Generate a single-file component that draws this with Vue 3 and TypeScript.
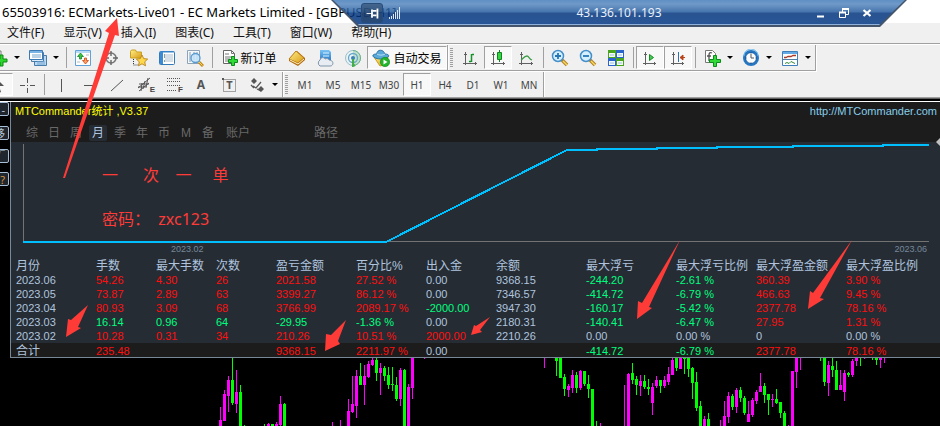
<script setup lang="ts">
interface Tool {
  id: string
  label: string
  text?: string
  pressed?: boolean
  menu?: boolean
  badge?: string
  glyph?: string
}
type Tone = 'r' | 'g' | 'n'
type Candle = [x: number, high: number, low: number, top: number, bottom: number, up: 0 | 1]

const menus = ['文件(F)', '显示(V)', '插入(I)', '图表(C)', '工具(T)', '窗口(W)', '帮助(H)']

const fileTools: Tool[][] = [
  [
    { id: 'new-chart', label: '新图表', menu: true },
    { id: 'profiles', label: '配置文件', menu: true },
  ],
  [
    { id: 'market', label: '市场报价' },
    { id: 'target', label: '数据窗口' },
    { id: 'favorites', label: '导航' },
    { id: 'terminal', label: '终端' },
    { id: 'tester', label: '策略测试' },
  ],
  [
    { id: 'order', label: '新订单', text: '新订单' },
    { id: 'book', label: 'MetaEditor' },
    { id: 'cloud', label: '虚拟主机' },
    { id: 'signals', label: '信号' },
    { id: 'auto', label: '自动交易', text: '自动交易', pressed: true },
  ],
]
const chartTools: Tool[][] = [
  [
    { id: 'bars', label: '柱状图' },
    { id: 'candles', label: '阴阳烛', pressed: true },
    { id: 'line', label: '折线图' },
  ],
  [
    { id: 'zoom-in', label: '放大' },
    { id: 'zoom-out', label: '缩小' },
    { id: 'tile', label: '平铺窗口' },
  ],
  [
    { id: 'scroll', label: '自动滚动', pressed: true },
    { id: 'shift', label: '图表平移', pressed: true },
  ],
  [
    { id: 'indicator', label: '指标', menu: true },
    { id: 'clock', label: '周期', menu: true },
    { id: 'template', label: '模板', menu: true },
  ],
]
const drawTools: Tool[][] = [
  [
    { id: 'cursor', label: '光标', pressed: true },
    { id: 'cross', label: '十字线' },
  ],
  [
    { id: 'vline', label: '垂直线' },
    { id: 'hline', label: '水平线' },
    { id: 'trend', label: '趋势线' },
    { id: 'channel', label: '等距通道', badge: 'E' },
    { id: 'fibo', label: '斐波那契', badge: 'F' },
    { id: 'text', label: '文字', glyph: 'A' },
    { id: 'textbox', label: '文字标签', glyph: 'T' },
    { id: 'arrows', label: '箭头', menu: true },
  ],
]
const periods = ['M1', 'M5', 'M15', 'M30', 'H1', 'H4', 'D1', 'W1', 'MN']
const tabs = ['综', '日', '周', '月', '季', '年', '币', 'M', '备', '账户', '路径']
const sideKeys = ['-', '移', '√', '?']
const notes = ['一      次    一     单', '密码：  zxc123']

const headers = ['月份', '手数', '最大手数', '次数', '盈亏金额', '百分比%', '出入金', '余额', '最大浮亏', '最大浮亏比例', '最大浮盈金额', '最大浮盈比例']
const rows: { cells: string[]; tones: string }[] = [
  { cells: ['2023.06', '54.26', '4.30', '26', '2021.58', '27.52 %', '0.00', '9368.15', '-244.20', '-2.61 %', '360.39', '3.90 %'], tones: 'nrrrrrnnggrr' },
  { cells: ['2023.05', '73.87', '2.89', '63', '3399.27', '86.12 %', '0.00', '7346.57', '-414.72', '-6.79 %', '466.63', '9.45 %'], tones: 'nrrrrrnnggrr' },
  { cells: ['2023.04', '80.93', '3.09', '68', '3766.99', '2089.17 %', '-2000.00', '3947.30', '-160.17', '-5.42 %', '2377.78', '78.16 %'], tones: 'nrrrrrgnggrr' },
  { cells: ['2023.03', '16.14', '0.96', '64', '-29.95', '-1.36 %', '0.00', '2180.31', '-140.41', '-6.47 %', '27.95', '1.31 %'], tones: 'ngggggnnggrr' },
  { cells: ['2023.02', '10.28', '0.31', '34', '210.26', '10.51 %', '2000.00', '2210.26', '0.00', '0.00 %', '0', '0.00 %'], tones: 'nrrrrrrnnnnn' },
]
const total = { cells: ['合计', '235.48', '', '', '9368.15', '2211.97 %', '0.00', '', '-414.72', '-6.79 %', '2377.78', '78.16 %'], tones: 'nrnnrrnnggrr' }
const tone = (tones: string, i: number): Tone => tones[i] as Tone

const candles: Candle[] = [
  [220, 49, 68, 62, 68, 1], [224, 32, 63, 36, 63, 1], [228, 18, 54, 22, 38, 1], [232, 0, 47, 22, 45, 0],
  [236, 12, 55, 34, 46, 1], [240, 27, 68, 34, 68, 0], [244, 67, 68, 67, 67, 0], [264, 66, 68, 66, 66, 0],
  [268, 65, 68, 66, 68, 1], [272, 66, 68, 66, 68, 0], [276, 64, 68, 66, 68, 1], [280, 38, 68, 46, 67, 1],
  [284, 45, 68, 46, 68, 0], [332, 64, 68, 64, 64, 1], [340, 62, 68, 62, 62, 1], [348, 41, 68, 53, 68, 1],
  [352, 18, 55, 46, 54, 1], [356, 12, 60, 18, 48, 1], [360, 5, 27, 18, 27, 0], [364, 7, 47, 18, 27, 1],
  [368, 3, 20, 6, 19, 1], [372, 0, 8, 2, 7, 1], [376, 0, 23, 2, 15, 0], [380, 5, 37, 10, 15, 1],
  [384, 8, 23, 10, 18, 0], [388, 9, 31, 17, 27, 0], [392, 9, 33, 26, 27, 0], [396, 19, 43, 27, 41, 0],
  [400, 10, 48, 12, 41, 1], [404, 11, 68, 12, 68, 0], [408, 26, 68, 29, 68, 1], [412, 0, 41, 0, 30, 1],
  [424, 0, 1, 0, 0, 1], [544, 0, 10, 0, 0, 1], [556, 0, 18, 0, 3, 0], [560, 0, 20, 0, 20, 0],
  [564, 16, 38, 19, 31, 0], [568, 26, 39, 28, 32, 1], [572, 12, 35, 17, 30, 1], [576, 14, 35, 17, 30, 0],
  [580, 12, 32, 13, 30, 1], [584, 13, 28, 13, 26, 0], [588, 17, 40, 26, 31, 0], [592, 31, 68, 31, 68, 0],
  [596, 63, 68, 63, 63, 0], [600, 65, 68, 65, 65, 1], [624, 27, 68, 27, 27, 1], [628, 15, 68, 16, 68, 1],
  [632, 5, 26, 15, 22, 0], [636, 18, 37, 21, 27, 0], [640, 17, 38, 23, 28, 1], [644, 17, 31, 23, 29, 0],
  [648, 21, 37, 29, 31, 0], [652, 25, 57, 29, 45, 1], [656, 18, 30, 22, 28, 1], [660, 22, 35, 22, 28, 0],
  [664, 18, 30, 22, 28, 1], [668, 9, 27, 16, 24, 1], [672, 0, 17, 2, 17, 1], [676, 0, 13, 0, 10, 0],
  [680, 0, 11, 0, 11, 1], [684, 0, 16, 0, 1, 0], [688, 0, 19, 0, 11, 0], [692, 9, 41, 10, 25, 0],
  [696, 14, 53, 24, 50, 0], [700, 43, 68, 48, 68, 0], [704, 58, 68, 61, 68, 1], [708, 55, 68, 61, 68, 0],
  [720, 62, 68, 62, 62, 1], [724, 43, 68, 58, 68, 1], [728, 34, 65, 38, 59, 1], [732, 36, 52, 38, 49, 0],
  [736, 30, 55, 32, 49, 1], [740, 29, 44, 32, 40, 0], [744, 38, 57, 40, 55, 0], [748, 43, 64, 56, 64, 1],
  [752, 40, 59, 42, 57, 1], [756, 32, 46, 34, 43, 1], [760, 15, 34, 28, 34, 1], [764, 25, 45, 28, 37, 0],
  [768, 36, 57, 36, 42, 0], [772, 36, 49, 41, 42, 1], [776, 31, 46, 41, 45, 0], [780, 44, 60, 44, 55, 0],
  [784, 53, 68, 55, 68, 0], [788, 67, 68, 67, 67, 1], [792, 13, 68, 13, 68, 1], [796, 0, 30, 0, 14, 1],
  [800, 0, 12, 0, 0, 1], [820, 0, 3, 0, 0, 0], [824, 0, 28, 0, 24, 0], [828, 3, 38, 7, 25, 1],
  [832, 0, 19, 8, 12, 0], [836, 3, 32, 12, 32, 0], [840, 12, 32, 27, 32, 1], [844, 12, 43, 15, 34, 1],
  [848, 14, 19, 15, 17, 0], [852, 1, 19, 3, 17, 1], [856, 0, 8, 0, 3, 1], [860, 0, 8, 0, 0, 0],
  [864, 0, 1, 0, 0, 1], [872, 0, 2, 0, 0, 0], [876, 0, 7, 0, 2, 0], [880, 0, 10, 0, 2, 1], [884, 0, 5, 0, 0, 1],
]

const arrows = [
  '117,18 105,31 109,33 63,178 65,178 115,35 119,36',
  '66,337 68,319 71,320 88,305 78,327 81,328',
  '325,351 326,334 331,335 346,320 338,341 340,344',
  '471,335 474,325 476,326 490,317 480,330 482,332',
  '637,319 638,301 642,303 680,240 649,307 652,308',
  '808,309 810,291 813,293 852,240 820,298 824,299',
]
</script>

<template>
  <svg class="sprite" aria-hidden="true">
    <defs>
      <linearGradient id="blue" x1="0" y1="0" x2="0" y2="1"><stop offset="0" stop-color="#7cc4f4" /><stop offset="1" stop-color="#1f74c4" /></linearGradient>
      <linearGradient id="gold" x1="0" y1="0" x2="1" y2="1"><stop offset="0" stop-color="#fff08a" /><stop offset="1" stop-color="#d99a16" /></linearGradient>
    </defs>
    <symbol id="new-chart" viewBox="0 0 18 18"><path d="M1 2h10v11H1z" fill="#fff" stroke="#777" /><path d="M10 6h3v4h4v3h-4v4h-3v-4H6v-3h4z" fill="#2ed52e" stroke="#0b8a13" /></symbol>
    <symbol id="profiles" viewBox="0 0 18 18"><path d="M5.500 6.500h12v10h-12z" fill="#b9d8f2" stroke="#477cab" /><path d="M2.500 3.500h12v9h-12z" fill="#dcecf9" stroke="#477cab" /><path d="M.5 1.500h13v9H.5z" fill="#fff" stroke="#3d79b4" /><path d="M1 3h12" stroke="#79b3e4" stroke-width="2" /><path d="M3 6h9M3 8h9M8 13h8M8 15h8" stroke="#72a4d0" /></symbol>
    <symbol id="market" viewBox="0 0 18 18"><path d="M1.500 1.500h15v15h-15z" fill="#fff" stroke="#62a2d8" /><path d="M2 2h14v2H2z" fill="#b8dbf4" /><path d="M6.500 4l3 3.500h-2V10h-2V7.500h-2z" fill="#35c43b" stroke="#16842a" stroke-width=".8" /><path d="M11.500 15l-3-3.500h2V9h2v2.500h2z" fill="#ffa062" stroke="#cc4714" stroke-width=".8" /><path d="M3 13h3M12 6h3" stroke="#b6bcc2" /></symbol>
    <symbol id="target" viewBox="0 0 18 18"><circle cx="9" cy="9" r="5" fill="none" stroke="#777" stroke-width="1.600" /><path d="M9 2v5M9 11v5M2 9h5M11 9h5" stroke="#666" stroke-width="1.400" /></symbol>
    <symbol id="favorites" viewBox="0 0 18 18"><path d="M.5 2.500l1-1.500h4l1 2h5v6H.5z" fill="url(#gold)" stroke="#c9a11d" /><path d="M3.500 10v6h5" fill="none" stroke="#333" stroke-dasharray="1 1" /><path d="M12 6l1.700 3.600 4 .5-3 2.700.8 4-3.500-2-3.500 2 .8-4-3-2.700 4-.5z" fill="#ffd94b" stroke="#b7811b" stroke-width=".9" /></symbol>
    <symbol id="terminal" viewBox="0 0 18 18"><rect x="1.500" y="2.500" width="15" height="13" rx="1" fill="#fff" stroke="#3479b8" /><path d="M2 3h3v12H2z" fill="#3a8ad4" /><path d="M2 3h14" stroke="#3a8ad4" /><path d="M7 6h8M7 8h8M7 10h8M7 12h8" stroke="#a9bed1" /><path d="M6 6h1M6 8h1M6 12h1" stroke="#333" /></symbol>
    <symbol id="tester" viewBox="0 0 18 18"><path d="M1.500 1.500h12v13h-12z" fill="#f5f8fb" stroke="#8fa3b6" /><path d="M4 3v10M8 3v8M11 3v8" stroke="#7d99b3" /><path d="M13 13l4 4" stroke="#c38a1d" stroke-width="3" /><path d="M13 13l3.500 3.500" stroke="#f4d45d" /><circle cx="9.500" cy="9" r="4.500" fill="#c5e4fa" fill-opacity=".85" stroke="#579bd0" stroke-width="1.300" /></symbol>
    <symbol id="order" viewBox="0 0 18 18"><path d="M2.500 1.500h8l3 3v10h-11z" fill="#fff" stroke="#666" /><path d="M10.500 1.500v3h3M4 5h4M4 8h7M4 10h5M4 12h4" fill="none" stroke="#777" /><path d="M10.500 7.500h3v3h3v3h-3v3h-3v-3h-3v-3h3z" fill="#32da38" stroke="#0b8a1d" /></symbol>
    <symbol id="book" viewBox="0 0 18 18"><path d="M1 10l8-8 8 7v2l-7 6-9-5z" fill="#b26a0c" /><path d="M1 10l7-8 8 7-6 5z" fill="url(#gold)" stroke="#bc7c14" /><path d="M2 11l8 4 6-5" fill="none" stroke="#fff5c6" /></symbol>
    <symbol id="cloud" viewBox="0 0 18 18"><path d="M4 1h9l2 2v9H4z" fill="url(#blue)" /><path d="M7 4h6M7 7h6" stroke="#dff2ff" /><path d="M4 17a3.500 3.500 0 010-6c1-3 4-3 5-1 2-1 4 0 4 1 5 0 5 6 1 6z" fill="#e8edf3" stroke="#7e95aa" /></symbol>
    <symbol id="signals" viewBox="0 0 18 18"><circle cx="9" cy="9" r="7.500" fill="#e9f2f5" stroke="#9cc0c9" /><path d="M9 1.500a7.500 7.500 0 010 15" fill="#bfe0cb" stroke="#6baf8b" /><circle cx="9" cy="9" r="4.500" fill="none" stroke="#68a7cb" stroke-width="1.300" /><circle cx="9" cy="9" r="2" fill="#3c7fba" /><path d="M9 10v7l2-1" stroke="#43ad48" stroke-width="2" fill="none" /></symbol>
    <symbol id="auto" viewBox="0 0 18 18"><path d="M2 8l6 9 7-2 1-7z" fill="url(#gold)" stroke="#c99c20" /><path d="M.8 7c0-2 3-2 4-2 0-5 7-5 8 0 3 0 4 1 4 2-2 4-14 4-16 0z" fill="#5aa9d8" stroke="#2b75a8" /><path d="M5 5c2 1.500 6 1.500 8 0" fill="none" stroke="#b9e3f8" /><circle cx="13" cy="13" r="4.700" fill="#22b52c" stroke="#0a8418" stroke-width=".6" /><path d="M11.500 10.500v5l4-2.500z" fill="#fff" /></symbol>
    <symbol id="bars" viewBox="0 0 18 18"><path d="M4.500 3v13M2 14.500h14M3 5.500h3M14.500 13v3" stroke="#606060" fill="none" /><path d="M10.500 5v8M8 12.500h2M11 5.500h2" stroke="#159329" stroke-width="1.500" /></symbol>
    <symbol id="candles" viewBox="0 0 18 18"><path d="M4.500 3v13M2 14.500h14M3 5.500h3M14.500 13v3" stroke="#606060" fill="none" /><path d="M10.500 1v12" stroke="#128522" /><path d="M8.500 3.500h4v7h-4z" fill="#36d343" stroke="#128522" /></symbol>
    <symbol id="line" viewBox="0 0 18 18"><path d="M4.500 3v13M2 14.500h14M3 5.500h3M14.500 13v3" stroke="#606060" fill="none" /><path d="M4 11c2-1 3-4 6-4 2 0 2 3 5 4" stroke="#3b9d47" stroke-width="1.300" fill="none" /></symbol>
    <symbol id="zoom-in" viewBox="0 0 18 18"><path d="M11 11l5 5" stroke="#b48120" stroke-width="3.500" /><path d="M12 12l4 4" stroke="#f6d966" stroke-width="1.500" /><circle cx="7" cy="7" r="5.500" fill="#d5effd" stroke="#448fc9" stroke-width="1.500" /><path d="M4 7h6M7 4v6" stroke="#2576b6" stroke-width="1.800" /></symbol>
    <symbol id="zoom-out" viewBox="0 0 18 18"><path d="M11 11l5 5" stroke="#b48120" stroke-width="3.500" /><path d="M12 12l4 4" stroke="#f6d966" stroke-width="1.500" /><circle cx="7" cy="7" r="5.500" fill="#d5effd" stroke="#448fc9" stroke-width="1.500" /><path d="M4 7h6" stroke="#2576b6" stroke-width="1.800" /></symbol>
    <symbol id="tile" viewBox="0 0 18 18"><path d="M1 1h8v8H1zM9 9h8v8H9z" fill="#4aa51e" /><path d="M9 1h8v8H9zM1 9h8v8H1z" fill="#2864cc" /><path d="M2 4h6v4H2zM10 4h6v4h-6zM2 12h6v4H2zM10 12h6v4h-6z" fill="#f5faff" /><path d="M3 6h4M11 6h4M3 14h4M11 14h4" stroke="#9bbbd6" /></symbol>
    <symbol id="scroll" viewBox="0 0 18 18"><path d="M4.500 3v13M2 14.500h13M3 5.500h3M13.500 13v3" stroke="#606060" fill="none" /><path d="M8.500 5.500v6l4-3z" fill="#48ca50" stroke="#168d27" /></symbol>
    <symbol id="shift" viewBox="0 0 18 18"><path d="M4.500 3v13M2 14.500h13M3 5.500h3M13.500 13v3" stroke="#606060" fill="none" /><path d="M9.500 3v10" stroke="#2873b2" /><path d="M11 8.500h5M14 6v5l-3-2.500z" fill="#bb4218" stroke="#bb4218" /></symbol>
    <symbol id="indicator" viewBox="0 0 18 18"><path d="M2.500 1.500h7l3 3v9h-10z" fill="#fff" stroke="#777" /><path d="M9 4c-2-1-3 0-3 2v6M4 7h4" fill="none" stroke="#555" stroke-width="1.300" /><path d="M10.500 6.500h3v4h4v3h-4v4h-3v-4h-4v-3h4z" fill="#32da38" stroke="#0b8a1d" /></symbol>
    <symbol id="clock" viewBox="0 0 18 18"><circle cx="9" cy="9" r="8" fill="#2577c3" /><path d="M2 7a7 7 0 0114 0" fill="none" stroke="#69b8ee" /><circle cx="9" cy="9" r="5.500" fill="#f8fcff" stroke="#1859a3" /><path d="M9 5v4h3" stroke="#555" fill="none" /><path d="M9 4v1M9 13v1M4 9h1M13 9h1" stroke="#999" /></symbol>
    <symbol id="template" viewBox="0 0 18 18"><path d="M1.500 2.500h15v14h-15z" fill="#fff" stroke="#3d7ebb" /><path d="M2 3h14v2H2z" fill="#64abe5" /><path d="M2 10.500h14" stroke="#527da5" /><path d="M3 8.500h2l2-1h3l2-1h3" stroke="#a83b28" fill="none" stroke-width="1.300" /><path d="M4 14.500l2-1 2 1 2-2 2 1 2 1" stroke="#328a39" fill="none" /></symbol>
    <symbol id="cursor" viewBox="0 0 18 18"><path d="M5 1l9 9H9l2 6-2 1-2-6-2 3z" fill="#555" /></symbol>
    <symbol id="cross" viewBox="0 0 18 18"><path d="M9.500 2v5M9.500 12v5M2 9.500h5M12 9.500h5M9 9.500h1" stroke="#555" /></symbol>
    <symbol id="vline" viewBox="0 0 18 18"><path d="M9.500 3v13" stroke="#555" /></symbol>
    <symbol id="hline" viewBox="0 0 18 18"><path d="M4 9.500h10" stroke="#555" /></symbol>
    <symbol id="trend" viewBox="0 0 18 18"><path d="M3 15L15 4" stroke="#555" /></symbol>
    <symbol id="channel" viewBox="0 0 18 18"><path d="M2 12L14 2M3 15l10-8M3 8h10M2 11h9M6 7l-1 8M9 5L7 13M12 2l-2 9" stroke="#555" /></symbol>
    <symbol id="fibo" viewBox="0 0 18 18"><path d="M3 2.500h13M3 5.500h13M3 9.500h13M3 14.500h9" stroke="#555" stroke-dasharray="1 1" /></symbol>
    <symbol id="textbox" viewBox="0 0 18 18"><path d="M3.500 3.500h12v12h-12z" stroke="#555" fill="none" stroke-dasharray="1 1" /><path d="M2 2h2v2H2z" fill="#555" /></symbol>
    <symbol id="arrows" viewBox="0 0 18 18"><path d="M3 5l3-3 3 3-3 3zM10 13l3-3 3 3-3 3z" fill="#555" /><path d="M5 10l3 2 5-6M3 9l3 3M9 13l4 2" stroke="#555" stroke-width="1.300" fill="none" /></symbol>
  </svg>

  <main class="app">
    <header class="titlebar">65503916: ECMarkets-Live01 - EC Markets Limited - [GBPUSD,H1]</header>
    <nav class="menubar">
      <button v-for="m in menus" :key="m" type="button">{{ m }}</button>
    </nav>

    <div class="toolbar">
      <div class="band first">
        <div v-for="(group, g) in fileTools" :key="g" class="group">
          <button v-for="t in group" :key="t.id" type="button" class="tool" :class="[{ pressed: t.pressed, drop: t.menu, wide: t.text }, t.id]" :aria-label="t.label">
            <svg class="icon"><use :href="'#' + t.id" /></svg>
            <span v-if="t.text">{{ t.text }}</span>
            <i v-if="t.menu" class="caret"></i>
          </button>
        </div>
      </div>
      <div class="band">
        <i class="grip"></i>
        <div v-for="(group, g) in chartTools" :key="g" class="group">
          <button v-for="t in group" :key="t.id" type="button" class="tool" :class="{ pressed: t.pressed, drop: t.menu }" :aria-label="t.label">
            <svg class="icon"><use :href="'#' + t.id" /></svg>
            <i v-if="t.menu" class="caret"></i>
          </button>
        </div>
      </div>
    </div>

    <div class="toolbar second">
      <div class="band first">
        <div v-for="(group, g) in drawTools" :key="g" class="group">
          <button v-for="t in group" :key="t.id" type="button" class="tool" :class="{ pressed: t.pressed, drop: t.menu }" :aria-label="t.label">
            <svg v-if="t.id !== 'text'" class="icon"><use :href="'#' + t.id" /></svg>
            <b v-if="t.glyph" class="glyph" :class="{ boxed: t.id === 'textbox' }">{{ t.glyph }}</b>
            <b v-if="t.badge" class="badge">{{ t.badge }}</b>
            <i v-if="t.menu" class="caret"></i>
          </button>
        </div>
      </div>
      <div class="band">
        <i class="grip"></i>
        <button v-for="p in periods" :key="p" type="button" class="tool period" :class="{ pressed: p === 'H1' }">{{ p }}</button>
      </div>
    </div>

    <section class="workspace">
      <aside class="side">
        <button v-for="k in sideKeys" :key="k" type="button">{{ k }}</button>
      </aside>
      <article class="panel">
        <header class="panel-head">
          <div class="panel-title">
            <h1>MTCommander统计 ,V3.37</h1>
            <a href="http://MTCommander.com">http://MTCommander.com</a>
          </div>
          <nav class="tabs">
            <button v-for="t in tabs" :key="t" type="button" :class="{ active: t === '月', pair: t.length > 1, far: t === '路径' }">{{ t }}</button>
          </nav>
        </header>

        <div class="chart">
          <svg class="curve" viewBox="0 0 929 102" preserveAspectRatio="none" shape-rendering="crispEdges">
            <path d="M12.500 2v98M12 99.500h906" stroke="#737373" fill="none" />
            <path d="M12 100H375L556 8H586V7H646V6H706V5H782V4H872V3H918" stroke="#00bfff" stroke-width="2" fill="none" />
          </svg>
          <div class="axis"><span>2023.02</span><span>2023.06</span></div>
          <div class="notes">
            <p v-for="n in notes" :key="n">{{ n }}</p>
          </div>
        </div>

        <table>
          <colgroup><col v-for="(h, i) in headers" :key="h" :class="'c' + i" /></colgroup>
          <thead>
            <tr><th v-for="h in headers" :key="h" scope="col">{{ h }}</th></tr>
          </thead>
          <tbody>
            <tr v-for="row in rows" :key="row.cells[0]">
              <td v-for="(c, i) in row.cells" :key="i" :class="tone(row.tones, i)">{{ c }}</td>
            </tr>
          </tbody>
          <tfoot>
            <tr><td v-for="(c, i) in total.cells" :key="i" :class="tone(total.tones, i)">{{ c }}</td></tr>
          </tfoot>
        </table>
      </article>
    </section>

    <svg class="candles" viewBox="0 0 940 68" preserveAspectRatio="none" shape-rendering="crispEdges">
      <g v-for="c in candles" :key="c[0]" :fill="c[5] ? '#ff00ff' : '#00ff00'">
        <rect :x="c[0]" :y="c[1]" width="1" :height="c[2] - c[1]" />
        <rect :x="c[0] - 1" :y="c[3]" width="3" :height="c[4] - c[3]" />
      </g>
    </svg>

    <div class="remote">
      <div class="remote-face">
        <button type="button" class="pin" aria-label="固定">
          <svg viewBox="0 0 22 20"><path d="M5 10.500h6" stroke="#fff" /><path d="M11 6v9M17 5v11" stroke="#fff" stroke-width="2" /><path d="M12 7.500h4M12 12.500h4" stroke="#fff" stroke-width="2" /></svg>
        </button>
        <svg class="bars" viewBox="0 0 12 12"><path d="M.5 10v2M2.500 9v3M4.500 7v5M6.500 5v7M8.500 3v9M10.500 0v12" stroke="#dce8f6" /></svg>
        <span class="address">43.136.101.193</span>
        <div class="window-keys">
          <button type="button" aria-label="最小化"><svg viewBox="0 0 10 10"><path d="M1 8.500h7" stroke="#fff" stroke-width="2" /></svg></button>
          <button type="button" aria-label="还原"><svg viewBox="0 0 10 10"><path d="M.5 4.500h6v5h-6zM3.500 4V1.500h6v5H7" fill="none" stroke="#fff" /><path d="M0 4.500h7M3 1h7" stroke="#fff" stroke-width="2" /></svg></button>
          <button type="button" aria-label="关闭"><svg viewBox="0 0 10 10"><path d="M1.500 2l7 6M8.500 2l-7 6" stroke="#fff" stroke-width="2.200" /></svg></button>
        </div>
      </div>
    </div>

    <i class="edge-mark"></i>
    <svg class="pointers" width="940" height="426" aria-hidden="true">
      <polygon v-for="a in arrows" :key="a" :points="a" fill="#ff3b38" />
    </svg>
  </main>
</template>

<style>
body {
  background: #000;
}
</style>

<style scoped>
.app {
  position: relative;
  overflow: hidden;
  font-family: "Noto Sans", "Noto Sans CJK SC", sans-serif;
  font-size: 12px;
  background: #000;
}
button {
  margin: 0;
  padding: 0;
  border: 0;
  background: none;
  font: inherit;
  color: inherit;
}
svg {
  display: block;
}
.sprite {
  position: absolute;
  width: 0;
  height: 0;
}
.titlebar {
  height: 23px;
  padding-left: 2px;
  font-size: 13px;
  line-height: 24px;
  background: #fff;
  color: #000;
  white-space: nowrap;
}
.menubar {
  display: flex;
  gap: 19px;
  height: 20px;
  padding-left: 7px;
  background: #f0f0f0;
  border-bottom: 1px solid #a0a0a0;
  color: #111;
  line-height: 20px;
  white-space: nowrap;
}
.toolbar {
  display: flex;
  height: 27px;
  background: #f0f0f0;
  border-top: 1px solid #fff;
}
.toolbar.second {
  height: 25px;
  border-top: 0;
  border-bottom: 1px solid #a0a0a0;
  box-shadow: 0 1px #606060;
}
.band {
  display: flex;
  box-sizing: border-box;
  border-right: 1px solid #a0a0a0;
  border-bottom: 1px solid #a0a0a0;
  box-shadow: 1px 1px #fff;
  height: 26px;
}
.second .band {
  height: 25px;
  border-bottom: 0;
  box-shadow: 1px 0 #fff;
}
.band.first {
  margin-left: -15px;
}
.group {
  display: flex;
}
.group + .group::before {
  content: "";
  width: 1px;
  margin: 2px 2px 2px 3px;
  background: #a0a0a0;
}
.grip {
  width: 3px;
  margin: 3px 3px 3px 2px;
  background: repeating-linear-gradient(#a0a0a0 0 1px, #f0f0f0 1px 2px);
}
.tool {
  position: relative;
  display: flex;
  align-items: center;
  justify-content: center;
  box-sizing: border-box;
  width: 28px;
  margin: 1px 0;
  border: 1px solid transparent;
}
.tool.wide {
  width: 68px;
  gap: 1px;
  white-space: nowrap;
}
.tool.wide.auto {
  width: 80px;
  gap: 3px;
}
.tool.drop {
  width: 39px;
  gap: 6px;
}
.tool.pressed {
  background: #f8f8f8;
  border-color: #a0a0a0 #fff #fff #a0a0a0;
}
.icon {
  flex: none;
  width: 18px;
  height: 18px;
}
.glyph {
  font-size: 12px;
  color: #555;
}
.glyph.boxed {
  position: absolute;
  inset: 0;
  padding-left: 1px;
  font-size: 11px;
  line-height: 22px;
}
.badge {
  position: absolute;
  right: 3px;
  bottom: 1px;
  font: bold 8px/8px "Liberation Sans", sans-serif;
  color: #444;
}
.caret {
  border: 3px solid transparent;
  border-top-color: #000;
  border-bottom: 0;
}
.period {
  font-size: 10px;
  color: #444;
}
.workspace {
  display: flex;
  margin-top: 3px;
  border-top: 1px solid #fff;
}
.side {
  flex: none;
  display: flex;
  flex-direction: column;
  gap: 9px;
  width: 10px;
}
.side button {
  box-sizing: border-box;
  width: 19px;
  height: 14px;
  margin-left: -10px;
  padding-right: 3px;
  border: 1px solid #a7bdd5;
  border-radius: 2px;
  background: #20262d;
  color: #b8c8d8;
  font-size: 11px;
  line-height: 11px;
  text-align: right;
}
.side button:first-child {
  margin-bottom: 1px;
}
.side button:last-child {
  color: #d8943c;
}
.panel {
  flex: 1;
  min-width: 0;
  background: #252c34;
  border-left: 1px solid #778899;
  border-bottom: 1px solid #778899;
  font-family: "Liberation Sans", "Noto Sans CJK SC", sans-serif;
}
.panel-head {
  height: 40px;
  background: #1c1c1c;
}
.panel-title {
  display: flex;
  justify-content: space-between;
  height: 20px;
  padding: 0 3px 0 4px;
  font-size: 11px;
  line-height: 19px;
}
h1 {
  margin: 0;
  font-size: 11px;
  font-weight: 400;
  color: #ff0;
}
a {
  color: #87ceeb;
  text-decoration: none;
}
.tabs {
  display: flex;
  padding: 3px 0 0 12px;
  gap: 4px;
  color: #696969;
}
.tabs button {
  width: 18px;
  height: 16px;
  line-height: 16px;
  border-radius: 2px;
}
.tabs .pair {
  width: 34px;
}
.tabs .far {
  margin-left: 50px;
}
.tabs .active {
  background: #252c34;
  color: #b0c4de;
}
.chart {
  position: relative;
  height: 116px;
}
.curve {
  width: 100%;
  height: 102px;
}
.axis {
  display: flex;
  justify-content: space-between;
  padding: 0 13px 0 160px;
  font-size: 9px;
  line-height: 10px;
  color: #778899;
}
.notes {
  position: absolute;
  top: 21px;
  left: 91px;
  color: #ff3b38;
  font: 16px/24px "Noto Sans", "Noto Sans CJK SC", sans-serif;
}
.notes p {
  margin: 0 0 20px;
  white-space: pre;
}
table {
  width: 100%;
  table-layout: fixed;
  border-collapse: collapse;
  font-size: 11px;
  color: #b0c4de;
}
.c0 { width: 85px; }
.c1, .c2, .c3 { width: 60px; }
.c4, .c9 { width: 80px; }
.c5, .c6 { width: 70px; }
.c7, .c8, .c10 { width: 90px; }
th,
td {
  height: 14px;
  padding: 0;
  line-height: 14px;
  text-align: left;
  white-space: nowrap;
}
th:first-child,
td:first-child {
  padding-left: 5px;
}
th {
  height: 15px;
  font-size: 12px;
  font-weight: 400;
}
tfoot tr {
  background: #1c1c1c;
}
tfoot td {
  height: 12px;
  padding-top: 2px;
  line-height: 12px;
}
tfoot td:first-child {
  font-size: 12px;
}
.r { color: #ff0f0f; }
.g { color: #00ff7f; }
.n { color: #b0c4de; }
.candles {
  width: 100%;
  height: 68px;
}
.remote {
  position: absolute;
  top: 0;
  left: 331px;
  right: 33px;
  height: 27px;
}
.remote::after {
  content: "";
  position: absolute;
  inset: 0;
  pointer-events: none;
  background: #44556b;
  clip-path: polygon(0 0, 27px 100%, calc(100% - 27px) 100%, 100% 0, calc(100% - 2px) 0, calc(100% - 28px) 25px, 28px 25px, 2px 0);
}
.remote-face {
  display: flex;
  align-items: center;
  height: 25px;
  padding: 0 35px 0 30px;
  clip-path: polygon(1px 0, calc(100% - 1px) 0, calc(100% - 26px) 100%, 26px 100%);
  background: linear-gradient(rgb(60 119 184 / 0.82) 0, rgb(80 131 188 / 0.82) 4px, rgb(29 85 154 / 0.82) 12px, rgb(0 50 124 / 0.84) 13px, rgb(0 54 131 / 0.84) 100%);
  box-shadow: inset 0 -1px #8fb0d8;
}
.pin {
  box-sizing: border-box;
  width: 22px;
  height: 20px;
  border: 1px solid #284d7b;
  border-radius: 3px;
  background: rgb(40 66 100 / 0.6);
}
.remote-face .bars {
  width: 12px;
  height: 12px;
  margin-left: 6px;
}
.address {
  flex: 1;
  padding-left: 21px;
  text-align: center;
  color: #e8f0fa;
}
.window-keys {
  display: flex;
  gap: 13px;
}
.window-keys svg,
.window-keys button {
  width: 10px;
  height: 10px;
}
.edge-mark {
  position: absolute;
  top: 138px;
  right: 0;
  border: 4px solid transparent;
  border-right-color: #c0c0c0;
  border-left: 0;
}
.pointers {
  position: absolute;
  top: 0;
  left: 0;
  pointer-events: none;
}
</style>
